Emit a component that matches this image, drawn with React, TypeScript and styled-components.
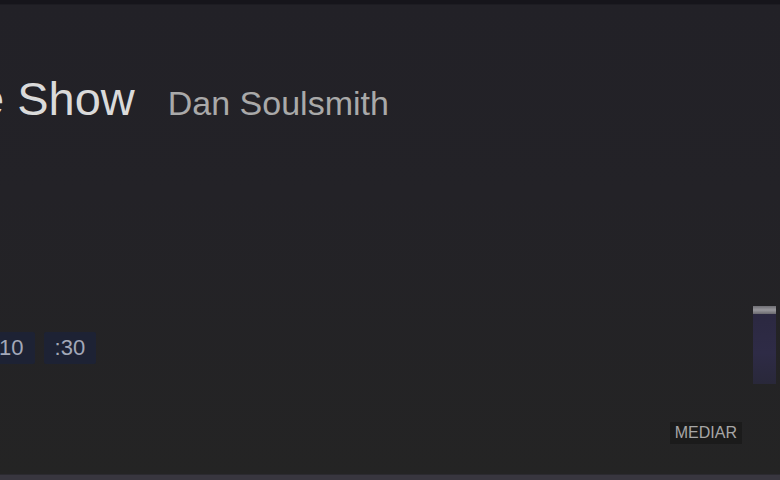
import styled, { createGlobalStyle } from "styled-components";

const GlobalStyle = createGlobalStyle`
  html, body {
    margin: 0;
    padding: 0;
    background: #232227;
  }
  body {
    font-family: "Liberation Sans", Arial, sans-serif;
  }
`;

const Page = styled.div`
  height: 480px;
  width: 780px;
  overflow: hidden;
  display: flex;
  flex-direction: column;
  background: linear-gradient(180deg, #222127 0%, #232227 40%, #242424 100%);
`;

const TopBar = styled.div`
  height: 4px;
  background: #16151b;
  border-bottom: 1px solid #1d1c22;
`;

const Main = styled.div`
  flex: 1;
  display: grid;
  grid-template-columns: 1fr 23px;
  padding-right: 4px;
  min-height: 0;
`;

const Content = styled.div`
  display: flex;
  flex-direction: column;
  min-width: 0;
`;

const Heading = styled.div`
  display: flex;
  align-items: baseline;
  gap: 33px;
  margin-top: 66px;
  margin-left: -22px;
  line-height: 56px;
  white-space: nowrap;
`;

const Title = styled.h1`
  margin: 0;
  font-size: 47px;
  font-weight: 400;
  color: #dadada;
`;

const Artist = styled.span`
  font-size: 34px;
  color: #a9a9a9;
`;

const Chips = styled.div`
  display: flex;
  gap: 9px;
  margin-top: 201px;
  margin-left: -18px;
`;

const Chip = styled.span`
  height: 32px;
  line-height: 32px;
  padding: 0 11px;
  background: #1d2234;
  color: #a3a8b8;
  font-size: 22px;
  border-radius: 2px;
`;

const Footer = styled.div`
  display: flex;
  justify-content: flex-end;
  margin-top: 58px;
  padding-right: 11px;
`;

const Tag = styled.span`
  height: 22px;
  line-height: 22px;
  padding: 0 5px;
  background: #1b1b1b;
  color: #a6a6a6;
  font-size: 16px;
`;

const Rail = styled.div`
  padding-top: 301px;
`;

const Slider = styled.div`
  height: 78px;
  display: flex;
  flex-direction: column;
  background: linear-gradient(180deg, #2b2840, #2e2b46 60%, #29283a);
`;

const Thumb = styled.div`
  height: 8px;
  background: linear-gradient(180deg, #6f6e74, #98979c 50%, #6a696f);
`;

const BottomStrip = styled.div`
  height: 5px;
  background: #38363f;
  border-top: 1px solid #2b2a30;
`;

export default function App() {
  return (
    <>
      <GlobalStyle />
      <Page>
        <TopBar />
        <Main>
          <Content>
            <Heading>
              <Title>e Show</Title>
              <Artist>Dan Soulsmith</Artist>
            </Heading>
            <Chips>
              <Chip>:10</Chip>
              <Chip>:30</Chip>
            </Chips>
            <Footer>
              <Tag>MEDIAR</Tag>
            </Footer>
          </Content>
          <Rail>
            <Slider>
              <Thumb />
            </Slider>
          </Rail>
        </Main>
        <BottomStrip />
      </Page>
    </>
  );
}
